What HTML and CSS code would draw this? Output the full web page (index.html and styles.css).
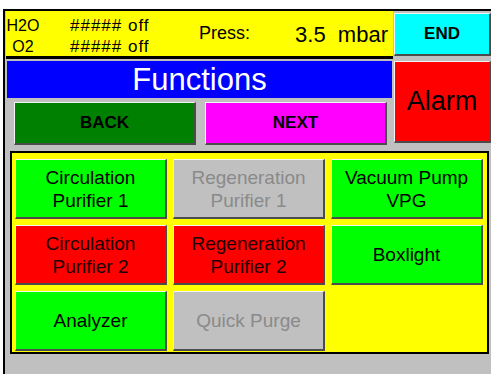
FILE: index.html
```html
<!DOCTYPE html>
<html lang="en">
<head>
    <meta charset="UTF-8">
    <title>Functions</title>
    <link rel="stylesheet" href="styles.css">
</head>
<body>
    <div class="screen">
        <div class="top">
            <div class="left">
                <div class="status">
                    <div class="gases">
                        <div>H2O</div>
                        <div>O2</div>
                    </div>
                    <div class="values">
                        <div>##### off</div>
                        <div>##### off</div>
                    </div>
                    <div class="press">Press:</div>
                    <div class="reading">3.5&nbsp; mbar</div>
                </div>
                <div class="title">Functions</div>
                <div class="nav">
                    <div class="btn nav-btn back">BACK</div>
                    <div class="btn nav-btn next">NEXT</div>
                </div>
            </div>
            <div class="right">
                <div class="btn end">END</div>
                <div class="btn alarm">Alarm</div>
            </div>
        </div>

        <div class="panel">
            <div class="btn func green">Circulation<br>Purifier 1</div>
            <div class="btn func grey">Regeneration<br>Purifier 1</div>
            <div class="btn func green">Vacuum Pump<br>VPG</div>
            <div class="btn func red">Circulation<br>Purifier 2</div>
            <div class="btn func red">Regeneration<br>Purifier 2</div>
            <div class="btn func green">Boxlight</div>
            <div class="btn func green">Analyzer</div>
            <div class="btn func grey">Quick Purge</div>
        </div>
    </div>
</body>
</html>
```

FILE: styles.css
```css
body {
    margin: 0;
    background-color: #ffffff;
    font-family: "Liberation Sans", Arial, sans-serif;
    color: #000000;
}
.screen {
    margin: 9px 0 0 3px;
    height: 365px;
    box-sizing: border-box;
    border-top: 2px solid #000000;
    border-left: 2px solid #000000;
    background-color: #c0c0c0;
    overflow: hidden;
}
.top {
    display: grid;
    grid-template-columns: 388px 1fr;
    column-gap: 1px;
}
.status {
    display: flex;
    height: 48px;
    box-sizing: border-box;
    margin-left: 1px;
    background-color: #ffff00;
    border-bottom: 3px solid #000000;
}
.gases {
    width: 34px;
    padding-top: 4px;
    font-size: 16px;
    line-height: 21px;
    text-align: center;
}
.values {
    width: 129px;
    margin-left: 30px;
    padding-top: 4px;
    font-size: 17px;
    letter-spacing: 1px;
    line-height: 21px;
}
.press {
    align-self: center;
    font-size: 18px;
}
.reading {
    align-self: center;
    margin-left: auto;
    padding: 3px 5px 0 0;
    font-size: 22px;
}
.title {
    height: 37px;
    margin: 2px 1px 0 2px;
    background-color: #0000ff;
    color: #ffffff;
    font-size: 31px;
    line-height: 37px;
    text-align: center;
}
.nav {
    display: flex;
    gap: 9px;
    padding: 4px 0 0 9px;
}
.btn {
    display: flex;
    align-items: center;
    justify-content: center;
    box-sizing: border-box;
    border-top: 1px solid #f4f4f4;
    border-left: 1px solid #f4f4f4;
    border-right: 2px solid #4c4c4c;
    border-bottom: 2px solid #4c4c4c;
    text-align: center;
}
.nav-btn {
    width: 182px;
    height: 43px;
    font-size: 17px;
    font-weight: bold;
}
.back {
    background-color: #008000;
}
.next {
    background-color: #ff00ff;
}
.end {
    height: 43px;
    margin-top: 2px;
    background-color: #00ffff;
    font-size: 17px;
    font-weight: bold;
}
.alarm {
    height: 82px;
    margin-top: 5px;
    background-color: #ff0000;
    font-size: 27px;
}
.panel {
    display: grid;
    grid-template-columns: repeat(3, 152px);
    grid-template-rows: repeat(3, 60px);
    gap: 6px;
    width: 479px;
    box-sizing: border-box;
    margin: 6px 0 0 5px;
    padding: 6px 4px 1px 3px;
    border: 2px solid #000000;
    background-color: #ffff00;
}
.func {
    font-size: 19px;
    line-height: 23px;
}
.green {
    background-color: #00ff00;
}
.red {
    background-color: #ff0000;
    color: #200000;
}
.grey {
    background-color: #c0c0c0;
    color: #8a8a8a;
}
```
